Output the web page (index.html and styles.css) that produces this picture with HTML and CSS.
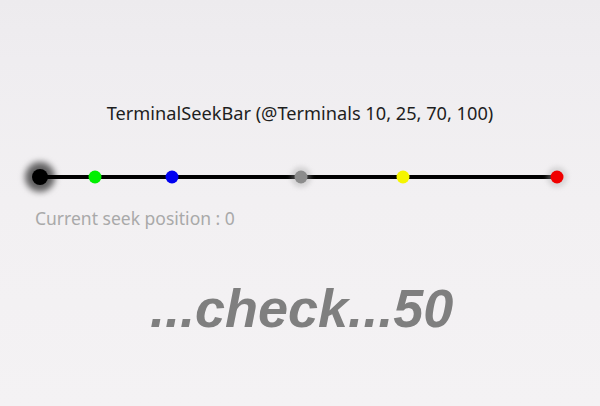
FILE: index.html
```html
<!DOCTYPE html>
<html>
<head>
<meta charset="utf-8">
<link rel="stylesheet" href="styles.css">
</head>
<body>
<main class="screen">
  <h1 class="title">TerminalSeekBar (@Terminals 10, 25, 70, 100)</h1>
  <div class="seekbar">
    <div class="track">
      <div class="stops">
        <span class="terminal green" style="left:10%"></span>
        <span class="terminal blue" style="left:25%"></span>
        <span class="terminal gray" style="left:50%"></span>
        <span class="terminal yellow" style="left:70%"></span>
        <span class="terminal red" style="left:100%"></span>
      </div>
      <span class="thumb"></span>
    </div>
  </div>
  <p class="position">Current seek position : 0</p>
  <p class="check">...check...50</p>
</main>
</body>
</html>
```
FILE: styles.css
```css
html, body {
  margin: 0;
  padding: 0;
}
body {
  width: 600px;
  height: 406px;
  overflow: hidden;
  background: linear-gradient(#edebee 0px, #efedf0 60px, #f2f0f2 200px, #f4f2f4 406px);
  font-family: "Noto Sans", Roboto, sans-serif;
}
.screen {
  display: flex;
  flex-direction: column;
  padding-top: 101px;
}
.title {
  margin: 0;
  text-align: center;
  font-size: 18.2px;
  font-weight: 400;
  line-height: 24px;
  color: #1e1e1e;
}
.seekbar {
  padding: 0 42px 0 40px;
  margin-top: 50px;
  height: 4px;
}
.track {
  position: relative;
  height: 4px;
  background: #000;
}
.stops {
  position: absolute;
  top: 0;
  bottom: 0;
  left: 4px;
  right: 1px;
}
.terminal, .thumb {
  position: absolute;
  top: 2px;
  border-radius: 50%;
  transform: translate(-50%, -50%);
}
.terminal {
  width: 13px;
  height: 13px;
}
.green { background: #00f000; }
.blue { background: #0000f0; }
.yellow { background: #f5f500; }
.gray {
  background: #8c8c8c;
  box-shadow: 0 0 4px 4px rgba(160,160,160,0.35);
}
.red {
  background: #f00000;
  box-shadow: 0 0 4px 4px rgba(170,170,170,0.35);
}
.thumb {
  left: 0;
  width: 16px;
  height: 16px;
  background: #000;
  box-shadow: 0 0 6px 7px rgba(0,0,0,0.6);
}
.position {
  margin: 29px 0 0 35px;
  font-size: 17.5px;
  line-height: 20px;
  color: #a9a9a9;
}
.check {
  margin: 50px 0 0 0;
  padding-left: 150px;
  font-family: "Liberation Sans", Arial, sans-serif;
  font-weight: 700;
  font-style: italic;
  font-size: 54px;
  line-height: 60px;
  color: #7f7f7f;
}
```
